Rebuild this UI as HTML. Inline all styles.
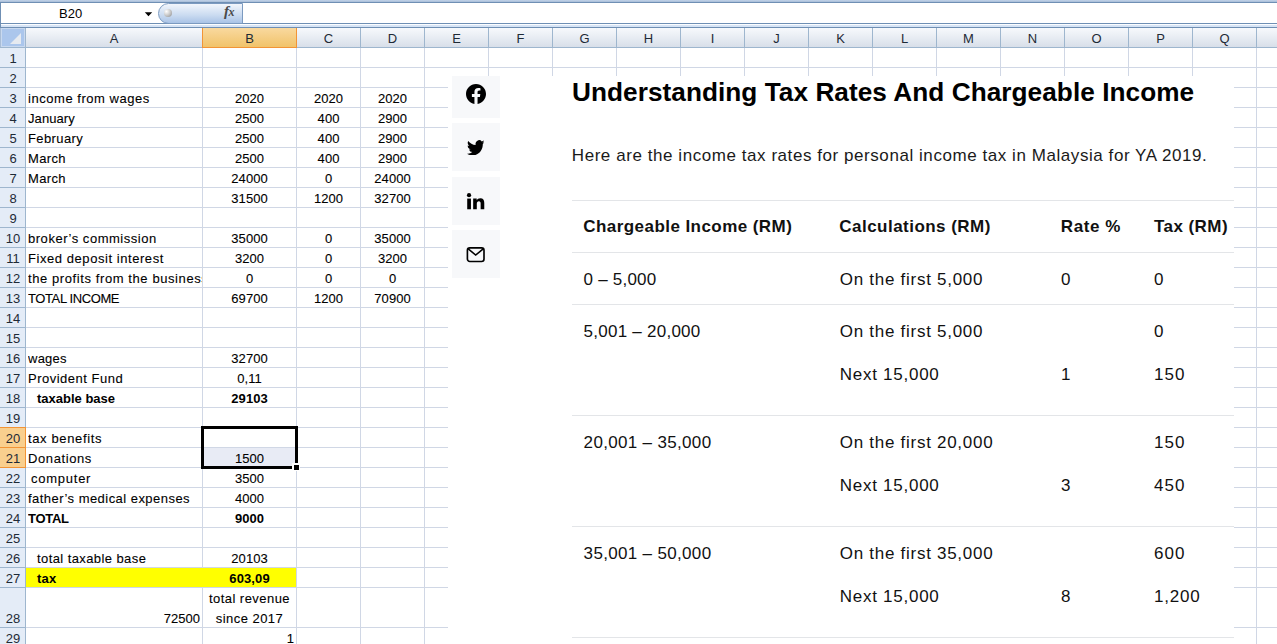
<!DOCTYPE html><html><head><meta charset="utf-8"><style>

*{margin:0;padding:0;box-sizing:border-box}
html,body{width:1277px;height:644px;overflow:hidden;background:#fff}
body{position:relative;font-family:"Liberation Sans",sans-serif;color:#000}
.a{position:absolute}
.t{position:absolute;font-size:13px;line-height:22px;white-space:nowrap;height:20px;-webkit-text-stroke:0.1px #000}
.hl{position:absolute;height:1px;background:#d0d7e5}
.vl{position:absolute;width:1px;background:#d0d7e5}
.ch{position:absolute;top:28px;height:19px;font-size:13px;line-height:21px;text-align:center;color:#1e2a36;
 background:linear-gradient(#f7f9fc,#e6ebf2 55%,#d8dfe9)}
.rh{position:absolute;left:0;width:25px;height:19px;font-size:13px;line-height:21px;text-align:center;color:#1e2a36;background:#e4ecf7;overflow:hidden;text-indent:1px}
.w{font-family:"Liberation Sans",sans-serif}

</style></head><body>
<div class="a" style="left:0;top:0;width:1277px;height:2px;background:linear-gradient(#c2d3e9,#a7bcd7)"></div>
<div class="a" style="left:0;top:2px;width:1277px;height:1px;background:#6f8fb4"></div>
<div class="a" style="left:0;top:3px;width:1277px;height:20px;background:#fff"></div>
<div class="a" style="left:0;top:3px;width:1px;height:24px;background:#6f8fb4"></div>
<div class="a" style="left:0;top:23px;width:1277px;height:1px;background:#6f8fb4"></div>
<div class="a" style="left:1px;top:24px;width:1276px;height:3px;background:linear-gradient(#fbfdff 33%,#d9e6f6 34%,#d4e2f4)"></div>
<div class="a" style="left:0;top:27px;width:1277px;height:1px;background:#6f8fb4"></div>
<div class="a" style="left:59px;top:4px;width:40px;font-size:13px;line-height:19px;color:#000">B20</div>
<svg class="a" style="left:144px;top:11px" width="10" height="7" viewBox="0 0 10 7"><path d="M0.8 1.2H8.2L4.5 5.3z" fill="#000"/></svg>
<div class="a" style="left:158px;top:3px;width:85px;height:21px;border:1px solid #7b9ac0;border-radius:11px 0 0 11px;background:linear-gradient(#f2f6fc,#c9daf0 60%,#a9c3e6)"></div>
<div class="a" style="left:164px;top:9px;width:8px;height:8px;border-radius:50%;background:radial-gradient(circle at 30% 30%,#ffffff,#c8c8c8 50%,#8a8a8a)"></div>
<div class="a" style="left:224px;top:2px;font-family:'Liberation Serif',serif;font-style:italic;font-weight:bold;font-size:15px;line-height:19px;color:#4a4a4a;letter-spacing:-0.5px">f<span style="font-size:12px">x</span></div>
<div class="a" style="left:0;top:28px;width:25px;height:19px;background:#c9d9ef;border-left:1px solid #a9bdd6"></div>
<div class="a" style="left:2px;top:29px;width:22px;height:17px;background:#abc6ec"></div>
<div class="a" style="left:10px;top:33px;width:0;height:0;border-left:11px solid transparent;border-bottom:11px solid #e6eaf0"></div>
<div class="ch" style="left:26px;width:176px">A</div>
<div class="ch" style="left:203px;width:93px;background:linear-gradient(#f9d99f,#f1c36a);color:#1e2a36">B</div>
<div class="ch" style="left:297px;width:63px">C</div>
<div class="ch" style="left:361px;width:63px">D</div>
<div class="ch" style="left:425px;width:63px">E</div>
<div class="ch" style="left:489px;width:63px">F</div>
<div class="ch" style="left:553px;width:63px">G</div>
<div class="ch" style="left:617px;width:63px">H</div>
<div class="ch" style="left:681px;width:63px">I</div>
<div class="ch" style="left:745px;width:63px">J</div>
<div class="ch" style="left:809px;width:63px">K</div>
<div class="ch" style="left:873px;width:63px">L</div>
<div class="ch" style="left:937px;width:63px">M</div>
<div class="ch" style="left:1001px;width:63px">N</div>
<div class="ch" style="left:1065px;width:63px">O</div>
<div class="ch" style="left:1129px;width:63px">P</div>
<div class="ch" style="left:1193px;width:63px">Q</div>
<div class="ch" style="left:1257px;width:20px"></div>
<div class="a" style="left:25px;top:28px;width:1px;height:19px;background:#9eb6ce"></div>
<div class="a" style="left:202px;top:28px;width:1px;height:19px;background:#9eb6ce"></div>
<div class="a" style="left:296px;top:28px;width:1px;height:19px;background:#9eb6ce"></div>
<div class="a" style="left:360px;top:28px;width:1px;height:19px;background:#9eb6ce"></div>
<div class="a" style="left:424px;top:28px;width:1px;height:19px;background:#9eb6ce"></div>
<div class="a" style="left:488px;top:28px;width:1px;height:19px;background:#9eb6ce"></div>
<div class="a" style="left:552px;top:28px;width:1px;height:19px;background:#9eb6ce"></div>
<div class="a" style="left:616px;top:28px;width:1px;height:19px;background:#9eb6ce"></div>
<div class="a" style="left:680px;top:28px;width:1px;height:19px;background:#9eb6ce"></div>
<div class="a" style="left:744px;top:28px;width:1px;height:19px;background:#9eb6ce"></div>
<div class="a" style="left:808px;top:28px;width:1px;height:19px;background:#9eb6ce"></div>
<div class="a" style="left:872px;top:28px;width:1px;height:19px;background:#9eb6ce"></div>
<div class="a" style="left:936px;top:28px;width:1px;height:19px;background:#9eb6ce"></div>
<div class="a" style="left:1000px;top:28px;width:1px;height:19px;background:#9eb6ce"></div>
<div class="a" style="left:1064px;top:28px;width:1px;height:19px;background:#9eb6ce"></div>
<div class="a" style="left:1128px;top:28px;width:1px;height:19px;background:#9eb6ce"></div>
<div class="a" style="left:1192px;top:28px;width:1px;height:19px;background:#9eb6ce"></div>
<div class="a" style="left:1256px;top:28px;width:1px;height:19px;background:#9eb6ce"></div>
<div class="a" style="left:0;top:47px;width:1277px;height:1px;background:#9eb6ce"></div>
<div class="a" style="left:202px;top:28px;width:95px;height:20px;border:1px solid #f29436;border-top:none"></div>
<div class="hl" style="left:26px;top:67px;width:1251px"></div>
<div class="hl" style="left:26px;top:87px;width:1251px"></div>
<div class="hl" style="left:26px;top:107px;width:1251px"></div>
<div class="hl" style="left:26px;top:127px;width:1251px"></div>
<div class="hl" style="left:26px;top:147px;width:1251px"></div>
<div class="hl" style="left:26px;top:167px;width:1251px"></div>
<div class="hl" style="left:26px;top:187px;width:1251px"></div>
<div class="hl" style="left:26px;top:207px;width:1251px"></div>
<div class="hl" style="left:26px;top:227px;width:1251px"></div>
<div class="hl" style="left:26px;top:247px;width:1251px"></div>
<div class="hl" style="left:26px;top:267px;width:1251px"></div>
<div class="hl" style="left:26px;top:287px;width:1251px"></div>
<div class="hl" style="left:26px;top:307px;width:1251px"></div>
<div class="hl" style="left:26px;top:327px;width:1251px"></div>
<div class="hl" style="left:26px;top:347px;width:1251px"></div>
<div class="hl" style="left:26px;top:367px;width:1251px"></div>
<div class="hl" style="left:26px;top:387px;width:1251px"></div>
<div class="hl" style="left:26px;top:407px;width:1251px"></div>
<div class="hl" style="left:26px;top:427px;width:1251px"></div>
<div class="hl" style="left:26px;top:447px;width:1251px"></div>
<div class="hl" style="left:26px;top:467px;width:1251px"></div>
<div class="hl" style="left:26px;top:487px;width:1251px"></div>
<div class="hl" style="left:26px;top:507px;width:1251px"></div>
<div class="hl" style="left:26px;top:527px;width:1251px"></div>
<div class="hl" style="left:26px;top:547px;width:1251px"></div>
<div class="hl" style="left:26px;top:567px;width:1251px"></div>
<div class="hl" style="left:26px;top:587px;width:1251px"></div>
<div class="hl" style="left:26px;top:627px;width:1251px"></div>
<div class="hl" style="left:26px;top:647px;width:1251px"></div>
<div class="vl" style="left:202px;top:48px;height:596px"></div>
<div class="vl" style="left:296px;top:48px;height:596px"></div>
<div class="vl" style="left:360px;top:48px;height:596px"></div>
<div class="vl" style="left:424px;top:48px;height:596px"></div>
<div class="vl" style="left:488px;top:48px;height:596px"></div>
<div class="vl" style="left:552px;top:48px;height:596px"></div>
<div class="vl" style="left:616px;top:48px;height:596px"></div>
<div class="vl" style="left:680px;top:48px;height:596px"></div>
<div class="vl" style="left:744px;top:48px;height:596px"></div>
<div class="vl" style="left:808px;top:48px;height:596px"></div>
<div class="vl" style="left:872px;top:48px;height:596px"></div>
<div class="vl" style="left:936px;top:48px;height:596px"></div>
<div class="vl" style="left:1000px;top:48px;height:596px"></div>
<div class="vl" style="left:1064px;top:48px;height:596px"></div>
<div class="vl" style="left:1128px;top:48px;height:596px"></div>
<div class="vl" style="left:1192px;top:48px;height:596px"></div>
<div class="vl" style="left:1256px;top:48px;height:596px"></div>
<div class="rh" style="top:48px;height:19px">1</div>
<div class="a" style="left:0;top:67px;width:25px;height:1px;background:#9eb6ce"></div>
<div class="rh" style="top:68px;height:19px">2</div>
<div class="a" style="left:0;top:87px;width:25px;height:1px;background:#9eb6ce"></div>
<div class="rh" style="top:88px;height:19px">3</div>
<div class="a" style="left:0;top:107px;width:25px;height:1px;background:#9eb6ce"></div>
<div class="rh" style="top:108px;height:19px">4</div>
<div class="a" style="left:0;top:127px;width:25px;height:1px;background:#9eb6ce"></div>
<div class="rh" style="top:128px;height:19px">5</div>
<div class="a" style="left:0;top:147px;width:25px;height:1px;background:#9eb6ce"></div>
<div class="rh" style="top:148px;height:19px">6</div>
<div class="a" style="left:0;top:167px;width:25px;height:1px;background:#9eb6ce"></div>
<div class="rh" style="top:168px;height:19px">7</div>
<div class="a" style="left:0;top:187px;width:25px;height:1px;background:#9eb6ce"></div>
<div class="rh" style="top:188px;height:19px">8</div>
<div class="a" style="left:0;top:207px;width:25px;height:1px;background:#9eb6ce"></div>
<div class="rh" style="top:208px;height:19px">9</div>
<div class="a" style="left:0;top:227px;width:25px;height:1px;background:#9eb6ce"></div>
<div class="rh" style="top:228px;height:19px">10</div>
<div class="a" style="left:0;top:247px;width:25px;height:1px;background:#9eb6ce"></div>
<div class="rh" style="top:248px;height:19px">11</div>
<div class="a" style="left:0;top:267px;width:25px;height:1px;background:#9eb6ce"></div>
<div class="rh" style="top:268px;height:19px">12</div>
<div class="a" style="left:0;top:287px;width:25px;height:1px;background:#9eb6ce"></div>
<div class="rh" style="top:288px;height:19px">13</div>
<div class="a" style="left:0;top:307px;width:25px;height:1px;background:#9eb6ce"></div>
<div class="rh" style="top:308px;height:19px">14</div>
<div class="a" style="left:0;top:327px;width:25px;height:1px;background:#9eb6ce"></div>
<div class="rh" style="top:328px;height:19px">15</div>
<div class="a" style="left:0;top:347px;width:25px;height:1px;background:#9eb6ce"></div>
<div class="rh" style="top:348px;height:19px">16</div>
<div class="a" style="left:0;top:367px;width:25px;height:1px;background:#9eb6ce"></div>
<div class="rh" style="top:368px;height:19px">17</div>
<div class="a" style="left:0;top:387px;width:25px;height:1px;background:#9eb6ce"></div>
<div class="rh" style="top:388px;height:19px">18</div>
<div class="a" style="left:0;top:407px;width:25px;height:1px;background:#9eb6ce"></div>
<div class="rh" style="top:408px;height:19px">19</div>
<div class="a" style="left:0;top:427px;width:25px;height:1px;background:#9eb6ce"></div>
<div class="rh" style="top:428px;height:19px;background:#f9cf8e">20</div>
<div class="a" style="left:0;top:447px;width:25px;height:1px;background:#9eb6ce"></div>
<div class="rh" style="top:448px;height:19px;background:#f9cf8e">21</div>
<div class="a" style="left:0;top:467px;width:25px;height:1px;background:#9eb6ce"></div>
<div class="rh" style="top:468px;height:19px">22</div>
<div class="a" style="left:0;top:487px;width:25px;height:1px;background:#9eb6ce"></div>
<div class="rh" style="top:488px;height:19px">23</div>
<div class="a" style="left:0;top:507px;width:25px;height:1px;background:#9eb6ce"></div>
<div class="rh" style="top:508px;height:19px">24</div>
<div class="a" style="left:0;top:527px;width:25px;height:1px;background:#9eb6ce"></div>
<div class="rh" style="top:528px;height:19px">25</div>
<div class="a" style="left:0;top:547px;width:25px;height:1px;background:#9eb6ce"></div>
<div class="rh" style="top:548px;height:19px">26</div>
<div class="a" style="left:0;top:567px;width:25px;height:1px;background:#9eb6ce"></div>
<div class="rh" style="top:568px;height:19px">27</div>
<div class="a" style="left:0;top:587px;width:25px;height:1px;background:#9eb6ce"></div>
<div class="rh" style="top:588px;height:39px;padding-top:20px">28</div>
<div class="a" style="left:0;top:627px;width:25px;height:1px;background:#9eb6ce"></div>
<div class="rh" style="top:628px;height:19px">29</div>
<div class="a" style="left:0;top:647px;width:25px;height:1px;background:#9eb6ce"></div>
<div class="a" style="left:25px;top:48px;width:1px;height:596px;background:#9eb6ce"></div>
<div class="a" style="left:0;top:427px;width:26px;height:41px;border:1px solid #f29436;border-left:none"></div>
<div class="a" style="left:0;top:447px;width:25px;height:1px;background:#f29436"></div>
<div class="a" style="left:26px;top:568px;width:270px;height:19px;background:#ffff00"></div>
<div class="a" style="left:203px;top:448px;width:93px;height:19px;background:#e8ebf5"></div>
<div class="t" style="left:28px;top:88px;width:174px;overflow:hidden;letter-spacing:0.54px;padding-left:0px;">income from wages</div>
<div class="t" style="left:28px;top:108px;width:174px;overflow:hidden;letter-spacing:0.08px;padding-left:0px;">January</div>
<div class="t" style="left:28px;top:128px;width:174px;overflow:hidden;letter-spacing:0.4px;padding-left:0px;">February</div>
<div class="t" style="left:28px;top:148px;width:174px;overflow:hidden;letter-spacing:0.33px;padding-left:0px;">March</div>
<div class="t" style="left:28px;top:168px;width:174px;overflow:hidden;letter-spacing:0.33px;padding-left:0px;">March</div>
<div class="t" style="left:28px;top:228px;width:174px;overflow:hidden;letter-spacing:0.53px;padding-left:0px;">broker’s commission</div>
<div class="t" style="left:28px;top:248px;width:174px;overflow:hidden;letter-spacing:0.56px;padding-left:0px;">Fixed deposit interest</div>
<div class="t" style="left:28px;top:268px;width:174px;overflow:hidden;letter-spacing:0.59px;padding-left:0px;">the profits from the business</div>
<div class="t" style="left:28px;top:288px;width:174px;overflow:hidden;letter-spacing:-0.39px;padding-left:0px;">TOTAL INCOME</div>
<div class="t" style="left:28px;top:348px;width:174px;overflow:hidden;letter-spacing:0.25px;padding-left:0px;">wages</div>
<div class="t" style="left:28px;top:368px;width:174px;overflow:hidden;letter-spacing:0.5px;padding-left:0px;">Provident Fund</div>
<div class="t" style="left:28px;top:428px;width:174px;overflow:hidden;letter-spacing:0.63px;padding-left:0px;">tax benefits</div>
<div class="t" style="left:28px;top:448px;width:174px;overflow:hidden;letter-spacing:0.6px;padding-left:0px;">Donations</div>
<div class="t" style="left:28px;top:488px;width:174px;overflow:hidden;letter-spacing:0.46px;padding-left:0px;">father’s medical expenses</div>
<div class="t" style="left:28px;top:388px;width:174px;overflow:hidden;letter-spacing:0px;padding-left:9px;font-weight:bold;-webkit-text-stroke:0;">taxable base</div>
<div class="t" style="left:28px;top:468px;width:174px;overflow:hidden;letter-spacing:0.75px;padding-left:3px;">computer</div>
<div class="t" style="left:28px;top:548px;width:174px;overflow:hidden;letter-spacing:0.41px;padding-left:9px;">total taxable base</div>
<div class="t" style="left:28px;top:508px;width:174px;overflow:hidden;letter-spacing:-0.3px;padding-left:0px;font-weight:bold;-webkit-text-stroke:0;">TOTAL</div>
<div class="t" style="left:28px;top:568px;width:174px;overflow:hidden;letter-spacing:0.2px;padding-left:9px;font-weight:bold;-webkit-text-stroke:0;">tax</div>
<div class="t" style="left:203px;top:88px;width:93px;text-align:center;"><span style="letter-spacing:0.1px;margin-right:-0.1px">2020</span></div>
<div class="t" style="left:203px;top:108px;width:93px;text-align:center;"><span style="letter-spacing:0.1px;margin-right:-0.1px">2500</span></div>
<div class="t" style="left:203px;top:128px;width:93px;text-align:center;"><span style="letter-spacing:0.1px;margin-right:-0.1px">2500</span></div>
<div class="t" style="left:203px;top:148px;width:93px;text-align:center;"><span style="letter-spacing:0.1px;margin-right:-0.1px">2500</span></div>
<div class="t" style="left:203px;top:168px;width:93px;text-align:center;"><span style="letter-spacing:0.1px;margin-right:-0.1px">24000</span></div>
<div class="t" style="left:203px;top:188px;width:93px;text-align:center;"><span style="letter-spacing:0.1px;margin-right:-0.1px">31500</span></div>
<div class="t" style="left:203px;top:228px;width:93px;text-align:center;"><span style="letter-spacing:0.1px;margin-right:-0.1px">35000</span></div>
<div class="t" style="left:203px;top:248px;width:93px;text-align:center;"><span style="letter-spacing:0.1px;margin-right:-0.1px">3200</span></div>
<div class="t" style="left:203px;top:268px;width:93px;text-align:center;"><span style="letter-spacing:0.1px;margin-right:-0.1px">0</span></div>
<div class="t" style="left:203px;top:288px;width:93px;text-align:center;"><span style="letter-spacing:0.1px;margin-right:-0.1px">69700</span></div>
<div class="t" style="left:203px;top:348px;width:93px;text-align:center;"><span style="letter-spacing:0.1px;margin-right:-0.1px">32700</span></div>
<div class="t" style="left:203px;top:368px;width:93px;text-align:center;"><span style="letter-spacing:0.1px;margin-right:-0.1px">0,11</span></div>
<div class="t" style="left:203px;top:448px;width:93px;text-align:center;"><span style="letter-spacing:0.1px;margin-right:-0.1px">1500</span></div>
<div class="t" style="left:203px;top:468px;width:93px;text-align:center;"><span style="letter-spacing:0.1px;margin-right:-0.1px">3500</span></div>
<div class="t" style="left:203px;top:488px;width:93px;text-align:center;"><span style="letter-spacing:0.1px;margin-right:-0.1px">4000</span></div>
<div class="t" style="left:203px;top:548px;width:93px;text-align:center;"><span style="letter-spacing:0.1px;margin-right:-0.1px">20103</span></div>
<div class="t" style="left:203px;top:388px;width:93px;text-align:center;font-weight:bold;-webkit-text-stroke:0;"><span style="letter-spacing:0.1px;margin-right:-0.1px">29103</span></div>
<div class="t" style="left:203px;top:508px;width:93px;text-align:center;font-weight:bold;-webkit-text-stroke:0;"><span style="letter-spacing:0.1px;margin-right:-0.1px">9000</span></div>
<div class="t" style="left:203px;top:568px;width:93px;text-align:center;font-weight:bold;-webkit-text-stroke:0;"><span style="letter-spacing:0.1px;margin-right:-0.1px">603,09</span></div>
<div class="t" style="left:297px;top:88px;width:63px;text-align:center;"><span style="letter-spacing:0.1px;margin-right:-0.1px">2020</span></div>
<div class="t" style="left:297px;top:108px;width:63px;text-align:center;"><span style="letter-spacing:0.1px;margin-right:-0.1px">400</span></div>
<div class="t" style="left:297px;top:128px;width:63px;text-align:center;"><span style="letter-spacing:0.1px;margin-right:-0.1px">400</span></div>
<div class="t" style="left:297px;top:148px;width:63px;text-align:center;"><span style="letter-spacing:0.1px;margin-right:-0.1px">400</span></div>
<div class="t" style="left:297px;top:168px;width:63px;text-align:center;"><span style="letter-spacing:0.1px;margin-right:-0.1px">0</span></div>
<div class="t" style="left:297px;top:188px;width:63px;text-align:center;"><span style="letter-spacing:0.1px;margin-right:-0.1px">1200</span></div>
<div class="t" style="left:297px;top:228px;width:63px;text-align:center;"><span style="letter-spacing:0.1px;margin-right:-0.1px">0</span></div>
<div class="t" style="left:297px;top:248px;width:63px;text-align:center;"><span style="letter-spacing:0.1px;margin-right:-0.1px">0</span></div>
<div class="t" style="left:297px;top:268px;width:63px;text-align:center;"><span style="letter-spacing:0.1px;margin-right:-0.1px">0</span></div>
<div class="t" style="left:297px;top:288px;width:63px;text-align:center;"><span style="letter-spacing:0.1px;margin-right:-0.1px">1200</span></div>
<div class="t" style="left:361px;top:88px;width:63px;text-align:center;"><span style="letter-spacing:0.1px;margin-right:-0.1px">2020</span></div>
<div class="t" style="left:361px;top:108px;width:63px;text-align:center;"><span style="letter-spacing:0.1px;margin-right:-0.1px">2900</span></div>
<div class="t" style="left:361px;top:128px;width:63px;text-align:center;"><span style="letter-spacing:0.1px;margin-right:-0.1px">2900</span></div>
<div class="t" style="left:361px;top:148px;width:63px;text-align:center;"><span style="letter-spacing:0.1px;margin-right:-0.1px">2900</span></div>
<div class="t" style="left:361px;top:168px;width:63px;text-align:center;"><span style="letter-spacing:0.1px;margin-right:-0.1px">24000</span></div>
<div class="t" style="left:361px;top:188px;width:63px;text-align:center;"><span style="letter-spacing:0.1px;margin-right:-0.1px">32700</span></div>
<div class="t" style="left:361px;top:228px;width:63px;text-align:center;"><span style="letter-spacing:0.1px;margin-right:-0.1px">35000</span></div>
<div class="t" style="left:361px;top:248px;width:63px;text-align:center;"><span style="letter-spacing:0.1px;margin-right:-0.1px">3200</span></div>
<div class="t" style="left:361px;top:268px;width:63px;text-align:center;"><span style="letter-spacing:0.1px;margin-right:-0.1px">0</span></div>
<div class="t" style="left:361px;top:288px;width:63px;text-align:center;"><span style="letter-spacing:0.1px;margin-right:-0.1px">70900</span></div>
<div class="t" style="left:26px;top:608px;width:174px;text-align:right">72500</div>
<div class="t" style="left:203px;top:588px;width:93px;text-align:center;letter-spacing:0.45px">total revenue</div>
<div class="t" style="left:203px;top:608px;width:93px;text-align:center;letter-spacing:0.45px">since 2017</div>
<div class="t" style="left:203px;top:628px;width:91px;text-align:right">1</div>
<div class="a" style="left:201px;top:426px;width:97px;height:43px;border:3px solid #000"></div>
<div class="a" style="left:292px;top:463px;width:8px;height:8px;background:#fff"></div>
<div class="a" style="left:294px;top:465px;width:5px;height:5px;background:#000"></div>
<div class="a" style="left:448px;top:76px;width:786px;height:568px;background:#fff;overflow:hidden">
<div class="a" style="left:4px;top:-6.00px;width:48px;height:48px;background:#f7f8fa"></div>
<div class="a" style="left:4px;top:47.00px;width:48px;height:48px;background:#f7f8fa"></div>
<div class="a" style="left:4px;top:101.00px;width:48px;height:48px;background:#f7f8fa"></div>
<div class="a" style="left:4px;top:154.00px;width:48px;height:48px;background:#f7f8fa"></div>
<svg class="a" style="left:18px;top:8.4px" width="20" height="20" viewBox="0 0 24 24"><path fill="#000" d="M24 12.073c0-6.627-5.373-12-12-12s-12 5.373-12 12c0 5.99 4.388 10.954 10.125 11.854v-8.385H7.078v-3.47h3.047V9.43c0-3.007 1.792-4.669 4.533-4.669 1.312 0 2.686.235 2.686.235v2.953H15.83c-1.491 0-1.956.925-1.956 1.874v2.25h3.328l-.532 3.47h-2.796v8.385C19.612 23.027 24 18.062 24 12.073z"/></svg>
<svg class="a" style="left:18.6px;top:63.6px" width="17.6" height="15.6" viewBox="0 2 24 20" preserveAspectRatio="none"><path fill="#000" d="M23.953 4.57a10 10 0 01-2.825.775 4.958 4.958 0 002.163-2.723c-.951.555-2.005.959-3.127 1.184a4.92 4.92 0 00-8.384 4.482C7.69 8.095 4.067 6.13 1.64 3.162a4.822 4.822 0 00-.666 2.475c0 1.71.87 3.213 2.188 4.096a4.904 4.904 0 01-2.228-.616v.06a4.923 4.923 0 003.946 4.827 4.996 4.996 0 01-2.212.085 4.936 4.936 0 004.604 3.417 9.867 9.867 0 01-6.102 2.105c-.39 0-.779-.023-1.17-.067a13.995 13.995 0 007.557 2.209c9.053 0 13.998-7.496 13.998-13.985 0-.21 0-.42-.015-.63A9.935 9.935 0 0024 4.59z"/></svg>
<svg class="a" style="left:17.9px;top:115.9px" width="20.2" height="18.4" viewBox="0 0 20 18"><circle cx="3" cy="3" r="2.1" fill="#000"/><rect x="1.2" y="6.4" width="3.7" height="10.6" fill="#000"/><path fill="#000" d="M7.1 6.4h3.5v1.6c.6-1 1.8-1.9 3.6-1.9 2.8 0 3.9 1.8 3.9 4.6V17h-3.6v-5.6c0-1.4-.4-2.3-1.7-2.3-1.4 0-2.1 1-2.1 2.4V17H7.1z"/></svg>
<svg class="a" style="left:18px;top:170px" width="20" height="17" viewBox="0 0 20 17"><rect x="1.4" y="1.85" width="16.6" height="13.6" rx="2.4" fill="none" stroke="#000" stroke-width="1.65"/><path d="M1.9 2.7l7.8 6.3 7.8-6.3" fill="none" stroke="#000" stroke-width="1.6" stroke-linejoin="miter"/></svg>
<div class="a" style="left:124.00px;top:-1.88px;font-size:26.2px;line-height:37px;white-space:nowrap;letter-spacing:0.05px;font-weight:bold;color:#000">Understanding Tax Rates And Chargeable Income</div>
<div class="a" style="left:123.80px;top:68.11px;font-size:17px;line-height:24px;white-space:nowrap;letter-spacing:0.56px;color:#1a1a1a">Here are the income tax rates for personal income tax in Malaysia for YA 2019.</div>
<div class="a" style="left:124px;top:124px;width:662px;height:1px;background:#e3e5e8"></div>
<div class="a" style="left:124px;top:176px;width:662px;height:1px;background:#e3e5e8"></div>
<div class="a" style="left:124px;top:228px;width:662px;height:1px;background:#e3e5e8"></div>
<div class="a" style="left:124px;top:339px;width:662px;height:1px;background:#e3e5e8"></div>
<div class="a" style="left:124px;top:450px;width:662px;height:1px;background:#e3e5e8"></div>
<div class="a" style="left:124px;top:561px;width:662px;height:1px;background:#e3e5e8"></div>
<div class="a" style="left:135.30px;top:138.91px;font-size:17px;line-height:24px;white-space:nowrap;letter-spacing:0.44px;font-weight:bold;color:#111">Chargeable Income (RM)</div>
<div class="a" style="left:391.30px;top:138.91px;font-size:17px;line-height:24px;white-space:nowrap;letter-spacing:0.47px;font-weight:bold;color:#111">Calculations (RM)</div>
<div class="a" style="left:612.80px;top:138.91px;font-size:17px;line-height:24px;white-space:nowrap;letter-spacing:0.6px;font-weight:bold;color:#111">Rate %</div>
<div class="a" style="left:706.00px;top:138.91px;font-size:17px;line-height:24px;white-space:nowrap;letter-spacing:0.44px;font-weight:bold;color:#111">Tax (RM)</div>
<div class="a" style="left:135.60px;top:191.91px;font-size:17px;line-height:24px;white-space:nowrap;letter-spacing:0.21px;color:#111">0 – 5,000</div>
<div class="a" style="left:391.80px;top:191.91px;font-size:17px;line-height:24px;white-space:nowrap;letter-spacing:0.72px;color:#111">On the first 5,000</div>
<div class="a" style="left:613.00px;top:191.91px;font-size:17px;line-height:24px;white-space:nowrap;letter-spacing:0px;color:#111">0</div>
<div class="a" style="left:706.10px;top:191.91px;font-size:17px;line-height:24px;white-space:nowrap;letter-spacing:0px;color:#111">0</div>
<div class="a" style="left:135.60px;top:244.31px;font-size:17px;line-height:24px;white-space:nowrap;letter-spacing:0.25px;color:#111">5,001 – 20,000</div>
<div class="a" style="left:391.80px;top:244.31px;font-size:17px;line-height:24px;white-space:nowrap;letter-spacing:0.72px;color:#111">On the first 5,000</div>
<div class="a" style="left:706.10px;top:244.31px;font-size:17px;line-height:24px;white-space:nowrap;letter-spacing:0px;color:#111">0</div>
<div class="a" style="left:391.80px;top:286.91px;font-size:17px;line-height:24px;white-space:nowrap;letter-spacing:0.73px;color:#111">Next 15,000</div>
<div class="a" style="left:613.00px;top:286.91px;font-size:17px;line-height:24px;white-space:nowrap;letter-spacing:0px;color:#111">1</div>
<div class="a" style="left:706.10px;top:286.91px;font-size:17px;line-height:24px;white-space:nowrap;letter-spacing:1.0px;color:#111">150</div>
<div class="a" style="left:135.60px;top:354.91px;font-size:17px;line-height:24px;white-space:nowrap;letter-spacing:0.33px;color:#111">20,001 – 35,000</div>
<div class="a" style="left:391.80px;top:354.91px;font-size:17px;line-height:24px;white-space:nowrap;letter-spacing:0.72px;color:#111">On the first 20,000</div>
<div class="a" style="left:706.10px;top:354.91px;font-size:17px;line-height:24px;white-space:nowrap;letter-spacing:1.0px;color:#111">150</div>
<div class="a" style="left:391.80px;top:397.91px;font-size:17px;line-height:24px;white-space:nowrap;letter-spacing:0.73px;color:#111">Next 15,000</div>
<div class="a" style="left:613.00px;top:397.91px;font-size:17px;line-height:24px;white-space:nowrap;letter-spacing:0px;color:#111">3</div>
<div class="a" style="left:706.10px;top:397.91px;font-size:17px;line-height:24px;white-space:nowrap;letter-spacing:1.0px;color:#111">450</div>
<div class="a" style="left:135.60px;top:465.91px;font-size:17px;line-height:24px;white-space:nowrap;letter-spacing:0.33px;color:#111">35,001 – 50,000</div>
<div class="a" style="left:391.80px;top:465.91px;font-size:17px;line-height:24px;white-space:nowrap;letter-spacing:0.72px;color:#111">On the first 35,000</div>
<div class="a" style="left:706.10px;top:465.91px;font-size:17px;line-height:24px;white-space:nowrap;letter-spacing:1.0px;color:#111">600</div>
<div class="a" style="left:391.80px;top:508.91px;font-size:17px;line-height:24px;white-space:nowrap;letter-spacing:0.73px;color:#111">Next 15,000</div>
<div class="a" style="left:613.00px;top:508.91px;font-size:17px;line-height:24px;white-space:nowrap;letter-spacing:0px;color:#111">8</div>
<div class="a" style="left:706.10px;top:508.91px;font-size:17px;line-height:24px;white-space:nowrap;letter-spacing:0.75px;color:#111">1,200</div>
</div>
</body></html>
